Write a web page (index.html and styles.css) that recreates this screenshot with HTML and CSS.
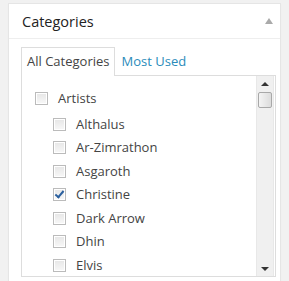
FILE: index.html
```html
<!DOCTYPE html>
<html lang="en">
<head>
    <meta charset="UTF-8">
    <title>Categories</title>
    <link rel="stylesheet" href="styles.css">
</head>
<body>
    <div class="postbox">
        <div class="hndle">
            <h3>Categories</h3>
            <span class="toggle-arrow"></span>
        </div>
        <div class="inside">
            <ul class="category-tabs">
                <li class="tabs">All Categories</li>
                <li><a href="#">Most Used</a></li>
            </ul>
            <div class="tabs-panel">
                <div class="checklist-wrap">
                    <ul class="categorychecklist">
                        <li>
                            <label><span class="checkbox"></span>Artists</label>
                            <ul class="children">
                                <li><label><span class="checkbox"></span>Althalus</label></li>
                                <li><label><span class="checkbox"></span>Ar-Zimrathon</label></li>
                                <li><label><span class="checkbox"></span>Asgaroth</label></li>
                                <li><label><span class="checkbox checked"></span>Christine</label></li>
                                <li><label><span class="checkbox"></span>Dark Arrow</label></li>
                                <li><label><span class="checkbox"></span>Dhin</label></li>
                                <li><label><span class="checkbox"></span>Elvis</label></li>
                            </ul>
                        </li>
                    </ul>
                </div>
                <div class="scrollbar">
                    <span class="arrow up"></span>
                    <div class="track">
                        <span class="thumb"></span>
                    </div>
                    <span class="arrow down"></span>
                </div>
            </div>
        </div>
    </div>
</body>
</html>
```

FILE: styles.css
```css
body {
    margin: 0;
    padding: 3px 8px 0 8px;
    background: #f1f1f1;
    font-family: "Open Sans", sans-serif;
    font-size: 13px;
    color: #444;
    overflow: hidden;
}
.postbox {
    width: 271px;
    background: #fff;
    border: 1px solid #e5e5e5;
    border-bottom: none;
    box-shadow: 0 1px 1px rgba(0, 0, 0, 0.04);
}
.hndle {
    display: flex;
    align-items: center;
    justify-content: space-between;
    height: 34px;
    padding: 0 7px 0 13px;
    border-bottom: 1px solid #eee;
}
.hndle h3 {
    margin: 0;
    font-size: 14.5px;
    font-weight: normal;
    color: #222;
}
.toggle-arrow {
    width: 0;
    height: 0;
    border-left: 4px solid transparent;
    border-right: 4px solid transparent;
    border-bottom: 6px solid #aaa;
}
.inside {
    padding: 8px 12px 5px 12px;
}
.category-tabs {
    list-style: none;
    margin: 0 0 -1px 0;
    padding: 0;
    display: flex;
    position: relative;
    z-index: 1;
}
.category-tabs li {
    padding: 5px 5px 6px 5px;
    border: 1px solid transparent;
    border-bottom: none;
    line-height: 16px;
}
.category-tabs li.tabs {
    border-color: #ddd;
    background: #fff;
    padding-bottom: 7px;
}
.category-tabs li a {
    color: #2a8bba;
    text-decoration: none;
}
.tabs-panel {
    display: flex;
    height: 200px;
    border: 1px solid #ddd;
    width: 253px;
}
.checklist-wrap {
    flex: 1;
    overflow: hidden;
    padding: 11px 0 0 13px;
}
.categorychecklist, .children {
    list-style: none;
    margin: 0;
    padding: 0;
}
.children {
    margin-left: 18px;
    margin-top: 2px;
}
.categorychecklist li {
    line-height: 23.5px;
}
.categorychecklist label {
    display: flex;
    align-items: center;
    white-space: nowrap;
}
.checkbox {
    width: 11px;
    height: 11px;
    border: 1px solid #bbb;
    background: linear-gradient(#e6e6e6, #f8f8f8);
    box-shadow: inset 1px 1px 0 #fff, inset -1px -1px 0 #fff;
    margin-right: 10px;
    position: relative;
}
.checkbox.checked::after {
    content: "";
    position: absolute;
    left: 3px;
    top: 0;
    width: 3px;
    height: 7px;
    border-right: 2px solid #2a5f9e;
    border-bottom: 2px solid #2a5f9e;
    transform: rotate(40deg);
}
.scrollbar {
    width: 16px;
    margin-right: 1px;
    display: flex;
    flex-direction: column;
    background: #f0f0f0;
    border-left: 1px solid #e8e8e8;
    border-right: 1px solid #e8e8e8;
}
.arrow {
    height: 15px;
    display: flex;
    align-items: center;
    justify-content: center;
}
.arrow::before {
    content: "";
    width: 0;
    height: 0;
    border-left: 4px solid transparent;
    border-right: 4px solid transparent;
}
.arrow.up::before {
    border-bottom: 4px solid #333;
}
.arrow.down::before {
    border-top: 4px solid #333;
}
.track {
    flex: 1;
}
.thumb {
    display: block;
    height: 14px;
    margin: 1px 1px 0 1px;
    border: 1px solid #a8a8a8;
    border-radius: 2px;
    background: linear-gradient(to right, #f4f4f4, #dcdcdc);
}
```
